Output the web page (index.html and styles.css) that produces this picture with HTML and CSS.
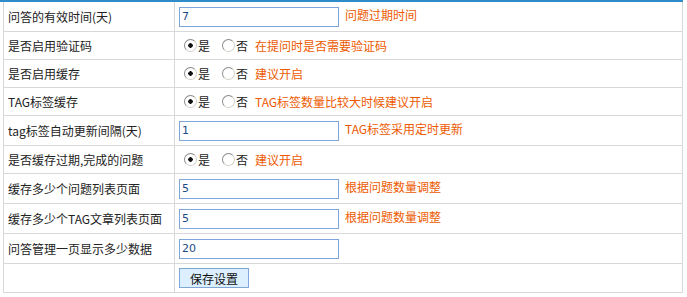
FILE: index.html
```html
<!doctype html>
<html lang="zh-CN">
  <head>
    <meta charset="UTF-8" />
    <title>问答设置</title>
    <link rel="stylesheet" href="styles.css">
  </head>
  <body>
    <div class="wrap">
      <table class="form-table">
        <tr class="row-input">
          <td class="label">问答的有效时间(天)</td>
          <td><input class="text" type="text" value="7" /><span class="tip">问题过期时间</span></td>
        </tr>
        <tr>
          <td class="label">是否启用验证码</td>
          <td>
            <div class="choices">
              <label class="opt"><input type="radio" name="code" checked />是</label>
              <label class="opt"><input type="radio" name="code" />否</label>
              <span class="tip">在提问时是否需要验证码</span>
            </div>
          </td>
        </tr>
        <tr>
          <td class="label">是否启用缓存</td>
          <td>
            <div class="choices">
              <label class="opt"><input type="radio" name="cache" checked />是</label>
              <label class="opt"><input type="radio" name="cache" />否</label>
              <span class="tip">建议开启</span>
            </div>
          </td>
        </tr>
        <tr>
          <td class="label">TAG标签缓存</td>
          <td>
            <div class="choices">
              <label class="opt"><input type="radio" name="tag" checked />是</label>
              <label class="opt"><input type="radio" name="tag" />否</label>
              <span class="tip">TAG标签数量比较大时候建议开启</span>
            </div>
          </td>
        </tr>
        <tr class="row-input">
          <td class="label">tag标签自动更新间隔(天)</td>
          <td><input class="text" type="text" value="1" /><span class="tip">TAG标签采用定时更新</span></td>
        </tr>
        <tr>
          <td class="label">是否缓存过期,完成的问题</td>
          <td>
            <div class="choices">
              <label class="opt"><input type="radio" name="expired" checked />是</label>
              <label class="opt"><input type="radio" name="expired" />否</label>
              <span class="tip">建议开启</span>
            </div>
          </td>
        </tr>
        <tr class="row-input">
          <td class="label">缓存多少个问题列表页面</td>
          <td><input class="text" type="text" value="5" /><span class="tip">根据问题数量调整</span></td>
        </tr>
        <tr class="row-input">
          <td class="label">缓存多少个TAG文章列表页面</td>
          <td><input class="text" type="text" value="5" /><span class="tip">根据问题数量调整</span></td>
        </tr>
        <tr class="row-input">
          <td class="label">问答管理一页显示多少数据</td>
          <td><input class="text" type="text" value="20" /></td>
        </tr>
        <tr class="row-btn">
          <td class="label"></td>
          <td><button class="btn" type="button">保存设置</button></td>
        </tr>
      </table>
    </div>
  </body>
</html>
```

FILE: styles.css
```css
body {
  margin: 0;
  background: #fff;
  font-family: "Noto Sans CJK SC", "DejaVu Sans", sans-serif;
  font-size: 12px;
  color: #222;
}
.wrap {
  width: 683px;
  border-top: 2px solid #2f8cc9;
}
.form-table {
  margin-left: 3px;
  width: 680px;
  border-collapse: collapse;
  border-left: 1px solid #d8d8d8;
  border-right: 1px solid #d8d8d8;
}
.form-table td {
  height: 27px;
  padding: 0 4px;
  border-bottom: 1px solid #d8d8d8;
  vertical-align: middle;
  white-space: nowrap;
}
.form-table .row-input td {
  height: 29px;
}
.form-table .row-btn td {
  height: 28px;
}
.form-table td.label {
  width: 162px;
  padding-left: 4px;
  border-right: 1px solid #d8d8d8;
  color: #222;
}
.text {
  box-sizing: border-box;
  width: 160px;
  height: 20px;
  margin: 0;
  padding: 0 2px;
  border: 1px solid #7fa6d8;
  font-family: "DejaVu Sans", sans-serif;
  font-size: 11px;
  color: #1b4c86;
  vertical-align: middle;
}
.text + .tip {
  margin-left: 6px;
}
.choices {
  display: flex;
  align-items: center;
}
.opt {
  display: flex;
  align-items: center;
  margin-right: 7px;
}
.opt input {
  appearance: none;
  box-sizing: border-box;
  width: 13px;
  height: 13px;
  margin: 0 1px 0 5px;
  border: 1px solid #8a8a8a;
  border-right-color: #d4d0c8;
  border-bottom-color: #d4d0c8;
  border-radius: 50%;
  background: #fff;
}
.opt input:checked {
  background: radial-gradient(circle, #111 0, #111 2px, #fff 2.5px);
}
.tip {
  color: #ee5a00;
}
.btn {
  box-sizing: border-box;
  width: 70px;
  height: 20px;
  margin: 0;
  padding: 0;
  border: 1px solid #7fa6d8;
  background: #dbefff;
  font-family: "Noto Sans CJK SC", sans-serif;
  font-size: 12px;
  color: #111;
  vertical-align: middle;
}
```
